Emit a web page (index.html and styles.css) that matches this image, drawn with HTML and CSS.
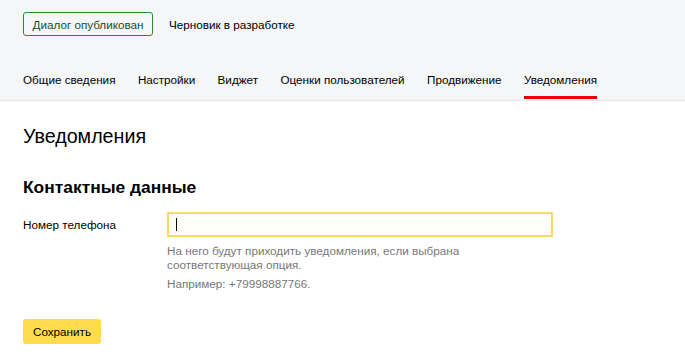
FILE: index.html
```html
<!DOCTYPE html>
<html>

<head>
  <meta charset="utf-8">
  <title>Уведомления</title>
  <link rel="stylesheet" href="styles.css">
</head>

<body>
  <div class="header">
    <div class="status">
      <button class="status-on">Диалог опубликован</button>
      <span class="status-off">Черновик в разработке</span>
    </div>
    <div class="tabs">
      <a class="tab">Общие сведения</a>
      <a class="tab">Настройки</a>
      <a class="tab">Виджет</a>
      <a class="tab">Оценки пользователей</a>
      <a class="tab">Продвижение</a>
      <a class="tab active">Уведомления</a>
    </div>
  </div>

  <div class="content">
    <h1>Уведомления</h1>
    <h2>Контактные данные</h2>

    <div class="field">
      <label for="phone">Номер телефона</label>
      <div class="control">
        <div class="input"><span class="caret"></span></div>
        <p class="hint">На него будут приходить уведомления, если выбрана<br>соответствующая опция.</p>
        <p class="hint example">Например: +79998887766.</p>
      </div>
    </div>

    <button class="save">Сохранить</button>
  </div>
</body>

</html>
```

FILE: styles.css
```css
body {
  margin: 0;
  font-family: 'Liberation Sans', Arial, sans-serif;
  font-size: 11.7px;
  color: #000;
  background: #fff;
}

/*///////////////////////////////////////////////////////////////////////////*/
.header {
  background-color: #f5f6f8;
  border-bottom: 1px solid #e4e5e8;
  padding: 12px 23px 0;
  height: 88px;
}

.status {
  display: flex;
  align-items: center;
  height: 24px;
}

.status-on {
  height: 24px;
  width: 130px;
  padding: 0;
  border: 1px solid #2b8a2b;
  border-radius: 3px;
  background: transparent;
  font-family: inherit;
  font-size: 11.7px;
  color: #234d23;
}

.status-off {
  margin-left: 16px;
}

.tabs {
  display: flex;
  margin-top: 34px;
}

.tab {
  margin-right: 22.4px;
  padding: 3px 0 10px;
  border-bottom: 3px solid transparent;
}

.active {
  border-bottom-color: #e60000;
}

/*///////////////////////////////////////////////////////////////////////////*/
.content {
  padding: 0 23px;
}

h1 {
  margin: 23px 0 0;
  font-size: 19.7px;
  font-weight: normal;
  line-height: 24px;
}

h2 {
  margin: 28px 0 0;
  font-size: 17.4px;
  font-weight: bold;
  line-height: 22px;
}

.field {
  display: flex;
  margin-top: 14px;
}

.field label {
  width: 144px;
  padding-top: 6px;
}

.input {
  width: 382px;
  height: 21px;
  border: 2px solid #fadb60;
  background-color: #fffef7;
  display: flex;
  align-items: center;
}

.caret {
  width: 1px;
  height: 13px;
  margin-left: 7px;
  background: #000;
}

.hint {
  margin: 7px 0 0;
  color: #777;
  line-height: 14px;
}

.example {
  margin-top: 5px;
}

.save {
  margin-top: 28px;
  height: 25px;
  width: 78px;
  padding: 0;
  border: none;
  border-radius: 3px;
  background-color: #ffdb4d;
  font-family: inherit;
  font-size: 11.7px;
  color: #000;
}
```
